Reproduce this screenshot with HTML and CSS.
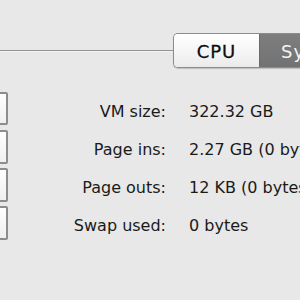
FILE: index.html
```html
<!DOCTYPE html>
<html lang="en">
<head>
<meta charset="UTF-8">
<title>Activity Monitor — System Memory</title>
<link rel="stylesheet" href="styles.css">
</head>
<body>
<header class="toolbar">
  <div class="rule"></div>
  <div class="segmented">
    <div class="seg">CPU</div>
    <div class="seg active">System Memory</div>
  </div>
</header>
<main class="rows">
  <div class="row"><div class="well"></div><span class="label">VM size:</span><span class="value">322.32 GB</span></div>
  <div class="row"><div class="well"></div><span class="label">Page ins:</span><span class="value">2.27 GB (0 bytes/sec)</span></div>
  <div class="row"><div class="well"></div><span class="label">Page outs:</span><span class="value">12 KB (0 bytes/sec)</span></div>
  <div class="row"><div class="well"></div><span class="label">Swap used:</span><span class="value">0 bytes</span></div>
</main>
</body>
</html>
```
FILE: styles.css
```css
*{box-sizing:border-box; margin:0; padding:0;}
html,body{ width:300px; height:300px; overflow:hidden; }
body{ background:#e8e8e8; color:#1a1a1a; font-family:'DejaVu Sans',sans-serif; font-size:16px; }

.toolbar{ display:flex; align-items:center; padding-top:33px; height:68px; white-space:nowrap; }
.rule{ width:173px; flex:none; height:2px; border-top:1px solid #939393; border-bottom:1px solid #f2f2f2; }
.segmented{ display:flex; height:35px; border:1px solid #8c8c8c; border-right:none; border-radius:5px 0 0 5px; overflow:hidden; box-shadow:0 1px 1px rgba(0,0,0,0.18); flex:none; }
.seg{ width:85px; padding-top:7px; text-align:center; font-size:18px; letter-spacing:1px; color:#0e0e0e; background:linear-gradient(#ffffff,#f4f4f4 60%,#ebebeb); -webkit-text-stroke:0.3px #0e0e0e; }
.seg.active{ width:auto; padding-left:21px; padding-right:20px; text-align:left; color:#f4f4f4; background:linear-gradient(#7e7e7e,#727272); border-left:1px solid #6a6a6a; -webkit-text-stroke:0; }

.rows{ display:flex; flex-direction:column; gap:4px; padding-top:24px; white-space:nowrap; }
.row{ display:grid; grid-template-columns:8px 135px auto; column-gap:23px; height:34px; }
.well{ margin-left:-30px; width:38px; border:2px solid #8d8d8d; border-radius:2px; background:linear-gradient(#ffffff,#f0f0f0); }
.row:first-child .well{ height:33px; }
.label, .value{ padding-top:10px; line-height:20px; }
.label{ text-align:right; }
```
